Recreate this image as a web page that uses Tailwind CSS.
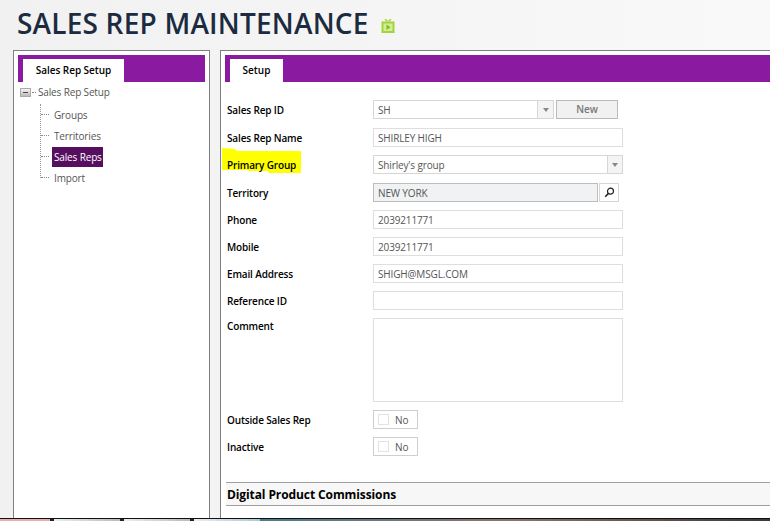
<!DOCTYPE html>
<html>
<head>
<script src="https://cdn.jsdelivr.net/npm/@tailwindcss/browser@4"></script>
</head>
<body class="m-0">
<div class="w-[770px] h-[521px] overflow-hidden flex flex-col bg-gradient-to-r from-[#f1f1f1] to-[#f9f9f9] font-['Open_Sans','Noto_Sans',sans-serif] text-[#444]">
  <header class="h-[50px] shrink-0 flex items-start pl-[17px] pt-[4px] gap-[12px]">
    <h1 class="text-[28px] leading-[38px] font-semibold text-[#1c2b3f] tracking-[0.2px] whitespace-nowrap">SALES REP MAINTENANCE</h1>
    <svg class="mt-[15px]" width="14" height="14" viewBox="0 0 14 14"><path d="M4 0 L6.5 2.5 M10 0 L7.5 2.5" stroke="#a2d43a" stroke-width="1.4" fill="none"/><rect x="0.5" y="2.5" width="13" height="11.5" fill="#a2d43a"/><rect x="2.5" y="4.5" width="9" height="7.5" fill="#d4ec9a"/><path d="M5.5 5.5 L9.5 8.2 L5.5 10.9 Z" fill="#7fb81f"/></svg>
  </header>
  <main class="flex-1 min-h-0 flex items-stretch pl-[13px] gap-[10px]">
    <aside class="w-[197px] shrink-0 bg-white border-x border-t border-[#7f7f7f] px-[4px] pt-[4px]">
      <div class="h-[27px] bg-[#8a1ba1] pl-[5px] flex items-end">
        <div class="w-[101px] h-[23px] bg-white text-black text-[10px] tracking-[-0.05px] font-semibold flex items-center justify-center">Sales Rep Setup</div>
      </div>
      <div class="pl-[2px] text-[10px] tracking-[-0.15px] text-[#555]">
        <div class="h-[20px] flex items-center">
          <span class="w-[11px] h-[9px] border border-[#aaa] bg-gradient-to-b from-[#f4f4f4] to-[#bbb] flex items-center justify-center"><span class="w-[5px] h-px bg-[#444]"></span></span>
          <span class="w-[4px] border-t border-dotted border-[#888] ml-px"></span>
          <span class="ml-[2px]">Sales Rep Setup</span>
        </div>
        <ul class="ml-[20px] mt-[2px] border-l border-dotted border-[#999] h-[74px] flex flex-col">
          <li class="h-[21px] shrink-0 flex items-center"><span class="w-[8px] border-t border-dotted border-[#888]"></span><span class="ml-[5px] pt-[2px]">Groups</span></li>
          <li class="h-[21px] shrink-0 flex items-center"><span class="w-[8px] border-t border-dotted border-[#888]"></span><span class="ml-[5px] pt-[2px]">Territories</span></li>
          <li class="h-[21px] shrink-0 flex items-center"><span class="w-[8px] border-t border-dotted border-[#888]"></span><span class="ml-[3px] px-[2px] pt-[1px] h-[20px] w-[51px] flex items-center bg-[#560f5f] text-white whitespace-nowrap">Sales Reps</span></li>
          <li class="h-[21px] shrink-0 flex items-center"><span class="w-[8px] border-t border-dotted border-[#888]"></span><span class="ml-[5px] pt-[2px]">Import</span></li>
        </ul>
      </div>
    </aside>
    <section class="flex-1 min-w-0 bg-white border-l border-t border-[#7f7f7f] pl-[4px] pt-[4px]">
      <div class="h-[27px] bg-[#8a1ba1] pl-[5px] flex items-end">
        <div class="w-[53px] h-[23px] bg-white text-black text-[10px] font-semibold flex items-center justify-center">Setup</div>
      </div>
      <form class="pl-[2px] pt-[18px] text-[10px] tracking-[-0.15px]">
        <div class="flex items-center h-[19px] mb-[9px]">
          <label class="w-[146px] pt-[2px] font-semibold text-black">Sales Rep ID</label>
          <div class="w-[181px] h-[19px] border border-[#d6d6d6] flex items-center pl-[4px] text-[#555]"><span class="flex-1 pt-[2px]">SH</span><span class="w-[16px] h-full border-l border-[#d6d6d6] bg-[#f4f4f4] flex items-center justify-center"><span class="w-0 h-0 border-x-[3px] border-x-transparent border-t-[4px] border-t-[#888]"></span></span></div>
          <button type="button" class="ml-[2px] w-[62px] h-[19px] border border-[#bbb] bg-[#f1f1f1] text-[#777] font-semibold">New</button>
        </div>
        <div class="flex items-center h-[19px] mb-[8px]">
          <label class="w-[146px] pt-[2px] font-semibold text-black">Sales Rep Name</label>
          <div class="w-[250px] h-[19px] border border-[#dedede] flex items-center pl-[4px] pt-[2px] text-[#555]">SHIRLEY HIGH</div>
        </div>
        <div class="flex items-center h-[19px] mb-[9px]">
          <label class="relative w-[146px] pt-[2px] font-semibold text-black">
            <svg class="absolute left-[-6px] top-[-8px]" width="81" height="26" viewBox="0 0 81 26"><path d="M1 0 L14 1 L16 3 L80 3 L80 25 L48 25 L47 23 L28 23 L26 22 L1 22 Z" fill="#ffff00"/></svg>
            <span class="relative">Primary Group</span>
          </label>
          <div class="w-[250px] h-[19px] border border-[#d6d6d6] flex items-center pl-[4px] text-[#555]"><span class="flex-1 pt-[2px]">Shirley's group</span><span class="w-[15px] h-full border-l border-[#d6d6d6] bg-[#f4f4f4] flex items-center justify-center"><span class="w-0 h-0 border-x-[3px] border-x-transparent border-t-[4px] border-t-[#888]"></span></span></div>
        </div>
        <div class="flex items-center h-[19px] mb-[8px]">
          <label class="w-[146px] pt-[2px] font-semibold text-black">Territory</label>
          <div class="w-[225px] h-[19px] border border-[#bdbdbd] bg-[#f1f2f4] flex items-center pl-[4px] pt-[2px] text-[#555]">NEW YORK</div>
          <span class="ml-[1px] w-[20px] h-[19px] border border-[#d6d6d6] flex items-center justify-center"><svg width="11" height="11" viewBox="0 0 11 11"><circle cx="6.5" cy="4.2" r="3" fill="none" stroke="#222" stroke-width="1.2"/><path d="M4.3 6.5 L1.2 9.8" stroke="#222" stroke-width="1.6"/></svg></span>
        </div>
        <div class="flex items-center h-[19px] mb-[8px]">
          <label class="w-[146px] pt-[2px] font-semibold text-black">Phone</label>
          <div class="w-[250px] h-[19px] border border-[#dedede] flex items-center pl-[4px] pt-[2px] text-[#555]">2039211771</div>
        </div>
        <div class="flex items-center h-[19px] mb-[8px]">
          <label class="w-[146px] pt-[2px] font-semibold text-black">Mobile</label>
          <div class="w-[250px] h-[19px] border border-[#dedede] flex items-center pl-[4px] pt-[2px] text-[#555]">2039211771</div>
        </div>
        <div class="flex items-center h-[19px] mb-[8px]">
          <label class="w-[146px] pt-[2px] font-semibold text-black">Email Address</label>
          <div class="w-[250px] h-[19px] border border-[#dedede] flex items-center pl-[4px] pt-[2px] text-[#555]">SHIGH@MSGL.COM</div>
        </div>
        <div class="flex items-center h-[19px] mb-[8px]">
          <label class="w-[146px] pt-[2px] font-semibold text-black">Reference ID</label>
          <div class="w-[250px] h-[19px] border border-[#dedede]"></div>
        </div>
        <div class="flex items-start h-[84px] mb-[8px]">
          <label class="w-[146px] font-semibold text-black pt-[1px]">Comment</label>
          <div class="w-[250px] h-[84px] border border-[#dedede]"></div>
        </div>
        <div class="flex items-center h-[19px] mb-[8px]">
          <label class="w-[146px] pt-[2px] font-semibold text-black">Outside Sales Rep</label>
          <div class="w-[45px] h-[19px] border border-[#cfcfcf] flex items-center pl-[4px] gap-[6px] text-[#555]"><span class="w-[11px] h-[11px] border border-[#e2e2e2]"></span><span class="pt-[2px]">No</span></div>
        </div>
        <div class="flex items-center h-[19px]">
          <label class="w-[146px] pt-[2px] font-semibold text-black">Inactive</label>
          <div class="w-[45px] h-[19px] border border-[#cfcfcf] flex items-center pl-[4px] gap-[6px] text-[#555]"><span class="w-[11px] h-[11px] border border-[#e2e2e2]"></span><span class="pt-[2px]">No</span></div>
        </div>
        <div class="mt-[26px] -ml-px pl-px pt-[2px] h-[24px] border-y border-[#a0a0a0] bg-[#f7f7f7] flex items-center text-[12px] tracking-[-0.1px] font-bold text-black">Digital Product Commissions</div>
      </form>
    </section>
  </main>
  <footer class="h-[3px] shrink-0 border-t border-[#111] bg-[#222] flex">
    <span class="w-[50px] bg-[#e6b1ad]"></span>
    <span class="ml-[4px] w-[66px] bg-gradient-to-r from-[#eee] to-[#bbb]"></span>
    <span class="ml-[4px] w-[66px] bg-gradient-to-r from-[#eee] to-[#bbb]"></span>
    <span class="ml-[4px] w-[66px] bg-gradient-to-r from-[#eee] to-[#a8c8d8]"></span>
    <span class="flex-1 bg-gradient-to-r from-[#4a7a90] via-[#8a7468] to-[#3a3a3a]"></span>
  </footer>
</div>
</body>
</html>
